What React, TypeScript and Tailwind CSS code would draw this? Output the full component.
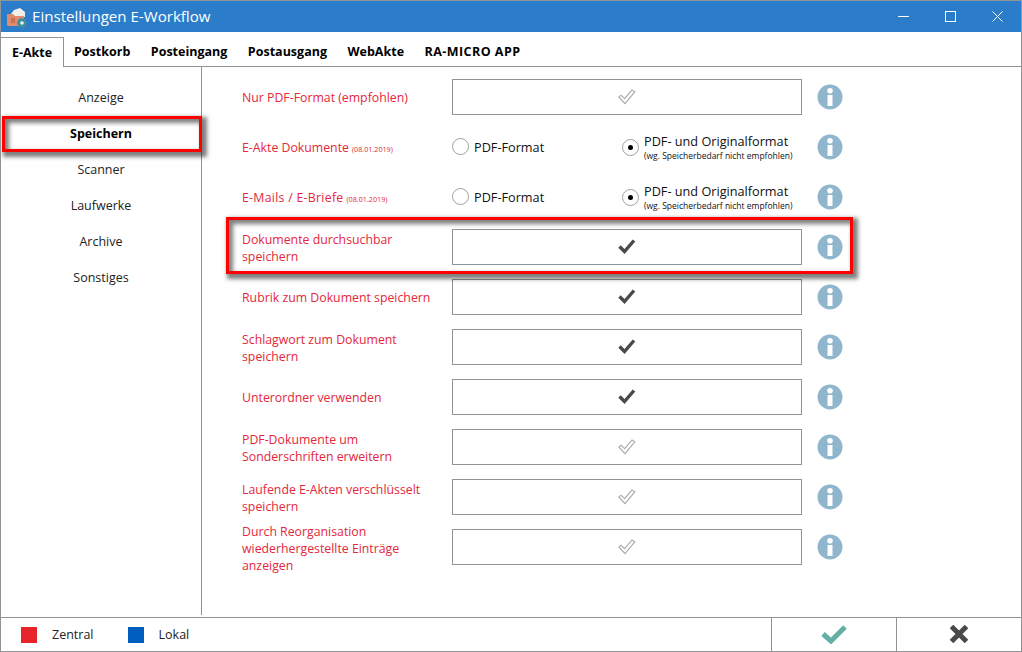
import React from "react";

const F = { fontFamily: '"Open Sans", "Noto Sans", sans-serif' };

function Info() {
  return (
    <svg width="26" height="26" viewBox="0 0 26 26" className="shrink-0">
      <circle cx="13" cy="13" r="12.5" fill="#8fb6cc" />
      <circle cx="13" cy="6.8" r="2.8" fill="#fff" />
      <rect x="10.5" y="11" width="5" height="11" fill="#fff" />
    </svg>
  );
}

function Check({ on }: { on: boolean }) {
  if (on) {
    return (
      <svg width="18" height="16" viewBox="0 0 18 16" className="-translate-y-px">
        <path d="M1.5 8.5 L6.5 13.5 L16 2.5" fill="none" stroke="#4a4a4a" strokeWidth="3.4" />
      </svg>
    );
  }
  return (
    <svg width="18" height="16" viewBox="0 0 18 16">
      <path d="M1 8.2 L3 6.2 L6.6 9.6 L14 1 L16.8 2.8 L7 14.6 Z" fill="#fff" stroke="#a8a8a8" strokeWidth="1.1" />
    </svg>
  );
}

function Radio({ on }: { on: boolean }) {
  return (
    <span className="flex h-[17px] w-[17px] shrink-0 items-center justify-center rounded-full border border-[#a0a0a0] bg-white">
      {on && <span className="h-[5px] w-[5px] rounded-full bg-black" />}
    </span>
  );
}

function Label({ text, date, single, wide }: { text: React.ReactNode; date?: string; single?: boolean; wide?: boolean }) {
  return (
    <div
      className={
        "w-[210px] shrink-0 text-[12.3px] leading-[17px] text-[#e5273a] " +
        (single ? "" : "translate-y-[1px]")
      }
    >
      <span className={wide ? "tracking-[0.28px]" : ""}>{text}</span>
      {date && <span className="ml-[3px] text-[7.2px]">{date}</span>}
    </div>
  );
}

function CheckRow({ label, on, single }: { label: React.ReactNode; on: boolean; single?: boolean }) {
  return (
    <div className="flex h-[50px] items-center">
      <Label text={label} single={single} />
      <div className="flex h-[36px] w-[350px] shrink-0 items-center justify-center border border-[#8e9497] bg-white">
        <Check on={on} />
      </div>
      <div className="ml-[15px]">
        <Info />
      </div>
    </div>
  );
}

function RadioRow({ label, date, wide }: { label: string; date: string; wide?: boolean }) {
  return (
    <div className="flex h-[50px] items-center">
      <Label text={label} date={date} wide={wide} />
      <div className="flex w-[350px] shrink-0 items-center">
        <div className="flex w-[170px] items-center gap-[5px] text-[12.7px] text-[#111]">
          <Radio on={false} />
          <span className="translate-y-[1px]">PDF-Format</span>
        </div>
        <div className="flex items-center gap-[5px]">
          <Radio on={true} />
          <div className="text-[#111]">
            <div className="-translate-y-px text-[12.7px] leading-[16px]">PDF- und Originalformat</div>
            <div className="text-[8.5px] leading-[11px] whitespace-nowrap">(wg. Speicherbedarf nicht empfohlen)</div>
          </div>
        </div>
      </div>
      <div className="ml-[15px]">
        <Info />
      </div>
    </div>
  );
}

export default function App() {
  const tabs = ["Postkorb", "Posteingang", "Postausgang", "WebAkte"];
  const side = ["Anzeige", "Speichern", "Scanner", "Laufwerke", "Archive", "Sonstiges"];
  return (
    <div style={F} className="relative flex h-[652px] w-[1022px] flex-col overflow-hidden border border-[#8e9497] bg-white">
      {/* title bar */}
      <div className="flex h-[31px] shrink-0 items-center bg-[#2b7dc9] pl-[5px] text-white">
        <svg width="22" height="22" viewBox="0 0 22 22" className="shrink-0">
          <path d="M5 8 L8 4 L14 2 L19 6 L19 11 L5 11 Z" fill="#f1efec" />
          <path d="M1 8 H7 L9 10 H18 V20 H2.5 Q1 20 1 18.5 Z" fill="#e08b6c" />
          <rect x="5" y="12" width="4" height="5" fill="#c8704f" />
          <circle cx="16" cy="17" r="4.8" fill="#3f8e9a" />
          <circle cx="16" cy="17" r="1.8" fill="#e8f2f4" />
        </svg>
        <span className="ml-[4px] text-[15.1px]">Einstellungen E-Workflow</span>
        <div className="ml-auto flex items-center">
          <span className="block h-px w-[11px] bg-white" />
          <span className="ml-[36px] block h-[11px] w-[11px] border border-white" />
          <svg width="11" height="11" viewBox="0 0 11 11" className="ml-[36px] mr-[18px]">
            <path d="M0.5 0.5 L10.5 10.5 M10.5 0.5 L0.5 10.5" stroke="#fff" strokeWidth="1" />
          </svg>
        </div>
      </div>

      {/* tabs */}
      <div className="flex h-[35px] shrink-0 items-end border-b border-[#8e9497] text-[12.5px] font-bold text-black">
        <div className="-mb-px flex h-[30px] w-[63px] items-center justify-center border-t border-r border-[#8e9497] bg-white pt-[2px]">E-Akte</div>
        <div className="flex h-[30px] items-center gap-[20.5px] pl-[10px] pt-[2px]">
          {tabs.map((t) => (
            <span key={t}>{t}</span>
          ))}
          <span className="tracking-[0.45px]">RA-MICRO APP</span>
        </div>
      </div>

      {/* body */}
      <div className="flex min-h-0 flex-1">
        <div className="w-[201px] shrink-0 border-r border-[#8e9497] pt-[13px]">
          {side.map((s) => (
            <div
              key={s}
              className={
                "flex h-[36px] items-center justify-center text-[12.5px] " +
                (s === "Speichern" ? "font-bold text-black" : "text-[#222]")
              }
            >
              {s}
            </div>
          ))}
        </div>
        <div className="flex-1 pl-[40px] pt-[5px]">
          <CheckRow label="Nur PDF-Format (empfohlen)" on={false} single />
          <RadioRow label="E-Akte Dokumente" date="(08.01.2019)" />
          <RadioRow label="E-Mails / E-Briefe" date="(08.01.2019)" wide />
          <CheckRow label={<>Dokumente durchsuchbar<br />speichern</>} on={true} />
          <CheckRow label="Rubrik zum Dokument speichern" on={true} single />
          <CheckRow label={<>Schlagwort zum Dokument<br />speichern</>} on={true} />
          <CheckRow label="Unterordner verwenden" on={true} single />
          <CheckRow label={<>PDF-Dokumente um<br />Sonderschriften erweitern</>} on={false} />
          <CheckRow label={<>Laufende E-Akten verschlüsselt<br />speichern</>} on={false} />
          <CheckRow label={<>Durch Reorganisation<br />wiederhergestellte Einträge<br />anzeigen</>} on={false} />
        </div>
      </div>

      {/* footer */}
      <div className="mt-[2px] flex h-[34px] shrink-0 items-center border-t border-[#8e9497] text-[12.5px] text-[#222]">
        <span className="ml-[20px] h-4 w-4 bg-[#e5262a]" />
        <span className="ml-[15px] translate-y-[1px]">Zentral</span>
        <span className="ml-[34px] h-4 w-4 bg-[#005fbe]" />
        <span className="ml-[15px] translate-y-[1px]">Lokal</span>
        <div className="ml-auto flex h-full">
          <div className="flex w-[125px] items-center justify-center border-l border-[#8e9497]">
            <svg width="26" height="20" viewBox="0 0 26 20" className="-translate-y-px">
              <path d="M2 10 L10 17 L24 3" fill="none" stroke="#62b0a5" strokeWidth="5" />
            </svg>
          </div>
          <div className="flex w-[125px] items-center justify-center border-l border-[#8e9497]">
            <svg width="20" height="20" viewBox="0 0 20 20" className="-translate-y-px">
              <path d="M2.5 2.5 L17.5 17.5 M17.5 2.5 L2.5 17.5" fill="none" stroke="#4a4a4a" strokeWidth="5" />
            </svg>
          </div>
        </div>
      </div>

      {/* annotation boxes */}
      <div className="absolute left-[1px] top-[115px] h-[36px] w-[200px] border-[3px] border-[#ff0000] shadow-[3px_3px_4px_2px_rgba(0,0,0,0.5),inset_3px_3px_4px_1px_rgba(0,0,0,0.5)]" />
      <div className="absolute left-[225px] top-[216px] h-[57px] w-[627px] border-[3px] border-[#ff0000] shadow-[3px_3px_4px_2px_rgba(0,0,0,0.5),inset_3px_3px_4px_1px_rgba(0,0,0,0.5)]" />
    </div>
  );
}
